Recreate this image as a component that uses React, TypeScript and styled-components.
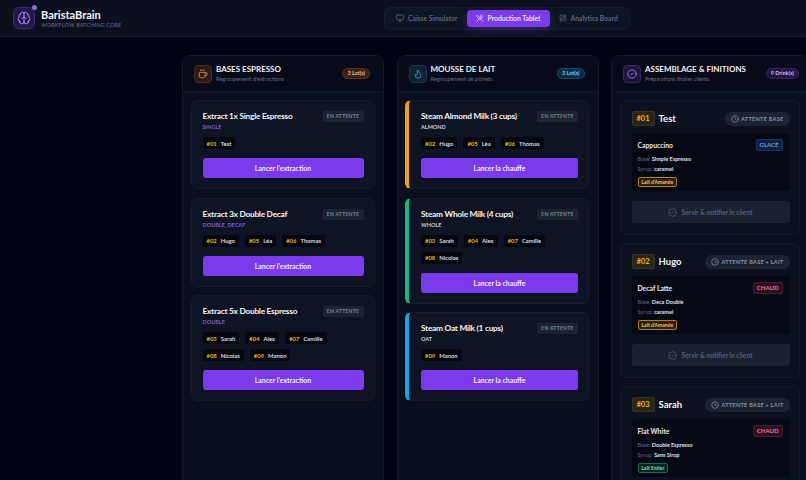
import React from 'react';
import styled, { createGlobalStyle } from 'styled-components';
import { Brain, CircleCheck, Clock, Coffee, Flame, LayoutDashboard, Monitor, UtensilsCrossed } from 'lucide-react';

const FONT = `'Lato', 'Noto Sans', sans-serif`;

const GlobalStyle = createGlobalStyle`
    html, body {
        margin: 0;
        height: 100%;
        background: #020312;
        overflow: hidden;
    }
    * {
        box-sizing: border-box;
    }
    #root {
        height: 100vh;
        font-family: ${FONT};
    }
`;

type Chip = { num: string; name: string };
type Batch = { title: string; sub: string; chips: Chip[][]; accent?: string };
type Ticket = {
    num: string;
    name: string;
    status: string;
    drink: string;
    temp: 'GLACÉ' | 'CHAUD';
    base: string;
    syrup: string;
    milk: string;
    milkKind: 'almond' | 'whole';
};

const espresso: Batch[] = [
    { title: 'Extract 1x Single Espresso', sub: 'SINGLE', chips: [[{ num: '#01', name: 'Test' }]] },
    {
        title: 'Extract 3x Double Decaf',
        sub: 'DOUBLE_DECAF',
        chips: [[{ num: '#02', name: 'Hugo' }, { num: '#05', name: 'Léa' }, { num: '#06', name: 'Thomas' }]],
    },
    {
        title: 'Extract 5x Double Espresso',
        sub: 'DOUBLE',
        chips: [
            [{ num: '#03', name: 'Sarah' }, { num: '#04', name: 'Alex' }, { num: '#07', name: 'Camille' }],
            [{ num: '#08', name: 'Nicolas' }, { num: '#09', name: 'Manon' }],
        ],
    },
];

const milk: Batch[] = [
    {
        title: 'Steam Almond Milk (3 cups)',
        sub: 'ALMOND',
        accent: '#f59e0b',
        chips: [[{ num: '#02', name: 'Hugo' }, { num: '#05', name: 'Léa' }, { num: '#06', name: 'Thomas' }]],
    },
    {
        title: 'Steam Whole Milk (4 cups)',
        sub: 'WHOLE',
        accent: '#10b981',
        chips: [
            [{ num: '#03', name: 'Sarah' }, { num: '#04', name: 'Alex' }, { num: '#07', name: 'Camille' }],
            [{ num: '#08', name: 'Nicolas' }],
        ],
    },
    {
        title: 'Steam Oat Milk (1 cups)',
        sub: 'OAT',
        accent: '#0ea5e9',
        chips: [[{ num: '#09', name: 'Manon' }]],
    },
];

const tickets: Ticket[] = [
    { num: '#01', name: 'Test', status: 'ATTENTE BASE', drink: 'Cappuccino', temp: 'GLACÉ', base: 'Simple Espresso', syrup: 'caramel', milk: "Lait d'Amande", milkKind: 'almond' },
    { num: '#02', name: 'Hugo', status: 'ATTENTE BASE + LAIT', drink: 'Decaf Latte', temp: 'CHAUD', base: 'Deca Double', syrup: 'caramel', milk: "Lait d'Amande", milkKind: 'almond' },
    { num: '#03', name: 'Sarah', status: 'ATTENTE BASE + LAIT', drink: 'Flat White', temp: 'CHAUD', base: 'Double Espresso', syrup: 'Sans Sirop', milk: 'Lait Entier', milkKind: 'whole' },
];

const BatchCard = ({ batch, action }: { batch: Batch; action: string }): React.ReactElement => (
    <Card $accent={batch.accent}>
        <CardTop>
            <div>
                <CardTitle>{batch.title}</CardTitle>
                <CardSub $accented={!!batch.accent}>{batch.sub}</CardSub>
            </div>
            <WaitBadge>EN ATTENTE</WaitBadge>
        </CardTop>
        {batch.chips.map((row, i) => (
            <ChipRow key={i}>
                {row.map((c) => (
                    <NameChip key={c.num}>
                        <b>{c.num}</b>
                        <span>{c.name}</span>
                    </NameChip>
                ))}
            </ChipRow>
        ))}
        <ActionButton>{action}</ActionButton>
    </Card>
);

const TicketCard = ({ ticket }: { ticket: Ticket }): React.ReactElement => (
    <TicketBox>
        <TicketTop>
            <TicketNum>{ticket.num}</TicketNum>
            <TicketName>{ticket.name}</TicketName>
            <StatusPill>
                <Clock size={8} strokeWidth={2} />
                {ticket.status}
            </StatusPill>
        </TicketTop>
        <DrinkPanel>
            <DrinkHead>
                <DrinkName>{ticket.drink}</DrinkName>
                <TempTag $hot={ticket.temp === 'CHAUD'}>{ticket.temp}</TempTag>
            </DrinkHead>
            <DrinkLine>
                Base: <b>{ticket.base}</b>
            </DrinkLine>
            <DrinkLine>
                Syrup: <b>{ticket.syrup}</b>
            </DrinkLine>
            <MilkTag $kind={ticket.milkKind}>{ticket.milk}</MilkTag>
        </DrinkPanel>
        <ServeButton>
            <CircleCheck size={9} strokeWidth={2} />
            Servir &amp; notifier le client
        </ServeButton>
    </TicketBox>
);

const App = (): React.ReactElement => {
    return (
        <Page>
            <GlobalStyle />
            <TopBar>
                <Brand>
                    <LogoBox>
                        <Brain size={14} strokeWidth={1.7} />
                        <LogoDot />
                    </LogoBox>
                    <div>
                        <BrandName>BaristaBrain</BrandName>
                        <BrandSub>WORKFLOW BATCHING CORE</BrandSub>
                    </div>
                </Brand>
                <Tabs>
                    <Tab>
                        <Monitor size={8} strokeWidth={1.8} />
                        Caisse Simulator
                    </Tab>
                    <Tab $active>
                        <UtensilsCrossed size={8} strokeWidth={1.8} />
                        Production Tablet
                    </Tab>
                    <Tab>
                        <LayoutDashboard size={8} strokeWidth={1.8} />
                        Analytics Board
                    </Tab>
                </Tabs>
            </TopBar>
            <Board>
                <Column>
                    <ColumnHead>
                        <ColumnIcon $color="#f0914a" $bg="#2c1a18" $border="#4a2c1e">
                            <Coffee size={10} strokeWidth={1.9} />
                        </ColumnIcon>
                        <ColumnText>
                            <ColumnTitle>BASES ESPRESSO</ColumnTitle>
                            <ColumnSub>Regroupement d'extractions</ColumnSub>
                        </ColumnText>
                        <CountPill $color="#fdba74" $bg="#35201a" $border="#5a3420">3 Lot(s)</CountPill>
                    </ColumnHead>
                    <ColumnBody>
                        {espresso.map((b) => (
                            <BatchCard key={b.title} batch={b} action="Lancer l'extraction" />
                        ))}
                    </ColumnBody>
                </Column>
                <Column>
                    <ColumnHead>
                        <ColumnIcon $color="#38a3dc" $bg="#0e2233" $border="#16394f">
                            <Flame size={10} strokeWidth={1.9} />
                        </ColumnIcon>
                        <ColumnText>
                            <ColumnTitle>MOUSSE DE LAIT</ColumnTitle>
                            <ColumnSub>Regroupement de pichets</ColumnSub>
                        </ColumnText>
                        <CountPill $color="#7dd3fc" $bg="#0d2a3e" $border="#14506f">3 Lot(s)</CountPill>
                    </ColumnHead>
                    <ColumnBody>
                        {milk.map((b) => (
                            <BatchCard key={b.title} batch={b} action="Lancer la chauffe" />
                        ))}
                    </ColumnBody>
                </Column>
                <Column $width={198}>
                    <ColumnHead $tight>
                        <ColumnIcon $color="#a78bfa" $bg="#1d1638" $border="#33265c">
                            <CircleCheck size={10} strokeWidth={1.9} />
                        </ColumnIcon>
                        <ColumnText>
                            <ColumnTitle>ASSEMBLAGE &amp; FINITIONS</ColumnTitle>
                            <ColumnSub>Préparations finales clients</ColumnSub>
                        </ColumnText>
                        <CountPill $color="#c4b5fd" $bg="#201641" $border="#352562">9 Drink(s)</CountPill>
                    </ColumnHead>
                    <ColumnBody>
                        {tickets.map((t) => (
                            <TicketCard key={t.num} ticket={t} />
                        ))}
                    </ColumnBody>
                </Column>
            </Board>
        </Page>
    );
};

export default App;

const Page = styled.div`
    display: flex;
    flex-direction: column;
    height: 480px;
    width: 806px;
    overflow: hidden;
    background: #020312;
`;

const TopBar = styled.header`
    flex: none;
    display: flex;
    align-items: center;
    height: 37px;
    padding: 0 13px;
    background: #0b0f1e;
    border-bottom: 1px solid #141a2a;
`;

const Brand = styled.div`
    display: flex;
    align-items: center;
    gap: 6px;
    width: 371px;
`;

const LogoBox = styled.div`
    position: relative;
    display: flex;
    align-items: center;
    justify-content: center;
    width: 22px;
    height: 22px;
    border-radius: 6px;
    color: #a78bfa;
    background: #24174a;
    border: 1px solid #3a2875;
`;

const LogoDot = styled.span`
    position: absolute;
    top: -3px;
    right: -3px;
    width: 5px;
    height: 5px;
    border-radius: 50%;
    background: #8b6fdc;
`;

const BrandName = styled.div`
    font-size: 11px;
    font-weight: 700;
    line-height: 13px;
    color: #f4f5f8;
`;

const BrandSub = styled.div`
    margin-top: 1px;
    font-size: 5.5px;
    font-weight: 500;
    line-height: 7px;
    letter-spacing: 0.1px;
    color: #5f6880;
`;

const Tabs = styled.nav`
    display: flex;
    align-items: center;
    height: 23px;
    padding: 2px;
    border-radius: 6px;
    background: #0f1422;
    border: 1px solid #171d2c;
`;

const Tab = styled.div<{ $active?: boolean }>`
    display: flex;
    align-items: center;
    gap: 4px;
    height: 17px;
    padding: 0 9px;
    border-radius: 4px;
    font-size: 6.8px;
    font-weight: 600;
    white-space: nowrap;
    color: ${(p) => (p.$active ? '#f3eeff' : '#66708a')};
    background: ${(p) => (p.$active ? '#7c3aed' : 'transparent')};
    box-shadow: ${(p) => (p.$active ? '0 3px 9px rgba(124, 58, 237, 0.3)' : 'none')};
`;

const Board = styled.main`
    flex: 1;
    min-height: 0;
    display: flex;
    gap: 12.5px;
    padding: 18px 0 0 182px;
`;

const Column = styled.section<{ $width?: number }>`
    flex: none;
    display: flex;
    flex-direction: column;
    width: ${(p) => p.$width ?? 202}px;
    height: 480px;
    border-radius: 8px;
    background: #0a0f1d;
    border: 1px solid #131929;
`;

const ColumnHead = styled.div<{ $tight?: boolean }>`
    flex: none;
    display: flex;
    align-items: center;
    height: 36px;
    padding: 0 ${(p) => (p.$tight ? 9 : 13)}px 0 11px;
    gap: 4px;
    background: #070a18;
    border-radius: 8px 8px 0 0;
    border-bottom: 1px solid #10162a;
`;

const ColumnIcon = styled.div<{ $color: string; $bg: string; $border: string }>`
    display: flex;
    align-items: center;
    justify-content: center;
    flex: none;
    width: 18px;
    height: 18px;
    border-radius: 4px;
    color: ${(p) => p.$color};
    background: ${(p) => p.$bg};
    border: 1px solid ${(p) => p.$border};
`;

const ColumnText = styled.div`
    flex: 1;
    min-width: 0;
`;

const ColumnTitle = styled.div`
    font-size: 8px;
    font-weight: 700;
    line-height: 10px;
    white-space: nowrap;
    color: #f1f3f7;
`;

const ColumnSub = styled.div`
    margin-top: 2px;
    font-size: 5.5px;
    line-height: 7px;
    white-space: nowrap;
    color: #667087;
`;

const CountPill = styled.div<{ $color: string; $bg: string; $border: string }>`
    flex: none;
    padding: 0 4px;
    height: 11px;
    line-height: 9px;
    font-size: 5.5px;
    font-weight: 700;
    border-radius: 6px;
    color: ${(p) => p.$color};
    background: ${(p) => p.$bg};
    border: 1px solid ${(p) => p.$border};
`;

const ColumnBody = styled.div`
    display: flex;
    flex-direction: column;
    gap: 8.5px;
    padding: 8px 8.5px 9px 7.5px;
`;

const Card = styled.article<{ $accent?: string }>`
    padding: 10px 10px 10px ${(p) => (p.$accent ? 12 : 11)}px;
    border-radius: 6px;
    background: #0e1423;
    border: 1px solid #141b2c;
    border-left: ${(p) => (p.$accent ? `4px solid ${p.$accent}` : '1px solid #141b2c')};
`;

const CardTop = styled.div`
    display: flex;
    justify-content: space-between;
    align-items: flex-start;
    margin-bottom: 6px;
`;

const CardTitle = styled.div`
    font-size: 8.3px;
    font-weight: 700;
    line-height: 11px;
    letter-spacing: -0.25px;
    color: #f2f3f6;
`;

const CardSub = styled.div<{ $accented: boolean }>`
    margin-top: 2px;
    font-size: 5.5px;
    font-weight: 700;
    line-height: 7px;
    color: ${(p) => (p.$accented ? '#c8ccd6' : '#7c5fc9')};
`;

const WaitBadge = styled.div`
    flex: none;
    width: 41px;
    height: 11px;
    line-height: 11px;
    text-align: center;
    font-size: 5px;
    font-weight: 700;
    letter-spacing: 0.3px;
    border-radius: 2px;
    color: #7b8496;
    background: #1c2433;
`;

const ChipRow = styled.div`
    display: flex;
    gap: 6px;
    margin-bottom: 5px;
`;

const NameChip = styled.div`
    display: flex;
    align-items: center;
    gap: 4px;
    height: 12px;
    padding: 0 4px;
    border-radius: 2px;
    font-size: 5.9px;
    font-weight: 600;
    color: #e2e5ec;
    background: #050711;

    & b {
        color: #eab308;
        font-weight: 700;
    }
`;

const ActionButton = styled.div`
    display: flex;
    align-items: center;
    justify-content: center;
    height: 20px;
    margin-top: 9px;
    border-radius: 3px;
    font-size: 6.9px;
    font-weight: 700;
    color: #f3edff;
    background: #7c3aed;
`;

const TicketBox = styled.article`
    padding: 10px 9px 10.5px 11px;
    border-radius: 6px;
    background: #0c1120;
    border: 1px solid #131a2a;
`;

const TicketTop = styled.div`
    display: flex;
    align-items: center;
    margin-bottom: 7px;
`;

const TicketNum = styled.div`
    height: 15px;
    line-height: 13px;
    padding: 0 4px;
    font-size: 7.5px;
    font-weight: 700;
    border-radius: 2px;
    color: #e9b10f;
    background: #2a2519;
    border: 1px solid #3a3320;
`;

const TicketName = styled.div`
    flex: 1;
    margin-left: 4px;
    font-size: 9.5px;
    font-weight: 700;
    color: #f3f4f7;
`;

const StatusPill = styled.div`
    display: flex;
    align-items: center;
    gap: 2.5px;
    height: 14px;
    padding: 0 6px;
    font-size: 5.5px;
    font-weight: 700;
    letter-spacing: 0.3px;
    white-space: nowrap;
    border-radius: 7px;
    color: #8992a4;
    background: #1c2433;
`;

const DrinkPanel = styled.div`
    height: 58px;
    padding: 6px 7px 0 6px;
    border-radius: 4px;
    background: #060914;
`;

const DrinkHead = styled.div`
    display: flex;
    justify-content: space-between;
    align-items: center;
    height: 12px;
    margin-bottom: 3px;
`;

const DrinkName = styled.div`
    font-size: 6.8px;
    font-weight: 700;
    color: #e6e8ee;
`;

const TempTag = styled.div<{ $hot: boolean }>`
    height: 12px;
    line-height: 10px;
    padding: 0 3px;
    font-size: 6px;
    font-weight: 700;
    border-radius: 2px;
    color: ${(p) => (p.$hot ? '#f1739d' : '#5f9df5')};
    background: ${(p) => (p.$hot ? '#2a1022' : '#0f1f3d')};
    border: 1px solid ${(p) => (p.$hot ? '#4a1830' : '#1c3560')};
`;

const DrinkLine = styled.div`
    font-size: 5.5px;
    line-height: 10px;
    color: #5f6880;

    & b {
        font-weight: 700;
        color: #dfe2e9;
    }
`;

const MilkTag = styled.div<{ $kind: 'almond' | 'whole' }>`
    width: fit-content;
    height: 10px;
    margin-top: 3px;
    line-height: 8px;
    padding: 0 3px;
    font-size: 5px;
    font-weight: 700;
    border-radius: 2px;
    color: ${(p) => (p.$kind === 'almond' ? '#f5c56b' : '#6ee7b7')};
    background: ${(p) => (p.$kind === 'almond' ? '#2a1e10' : '#0b2420')};
    border: 1px solid ${(p) => (p.$kind === 'almond' ? '#b07a1e' : '#14694f')};
`;

const ServeButton = styled.div`
    display: flex;
    align-items: center;
    justify-content: center;
    gap: 4px;
    height: 22px;
    margin-top: 10px;
    border-radius: 3px;
    font-size: 6.6px;
    font-weight: 700;
    color: #566074;
    background: #1a2232;
`;
